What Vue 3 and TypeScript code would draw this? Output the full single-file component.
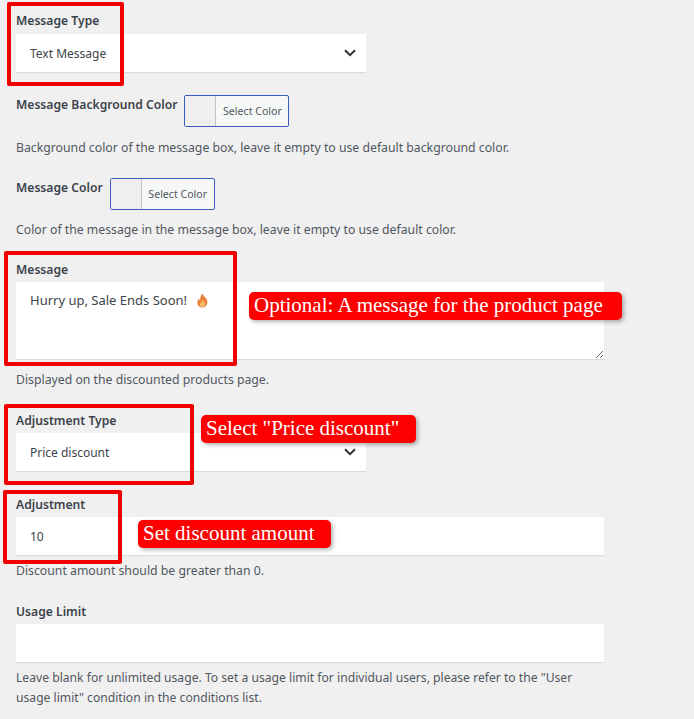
<script setup lang="ts">
interface Frame { x: number; y: number; w: number; h: number }
interface Tag { x: number; y: number; w: number; text: string }
const frames: Frame[] = [
  { x: 7, y: 2, w: 117, h: 84 },
  { x: 4, y: 251, w: 233, h: 115 },
  { x: 4, y: 404, w: 190, h: 81 },
  { x: 3, y: 490, w: 119, h: 74 },
]
const tags: Tag[] = [
  { x: 249, y: 292, w: 373, text: 'Optional: A message for the product page' },
  { x: 201, y: 415, w: 215, text: 'Select "Price discount"' },
  { x: 138, y: 520, w: 193, text: 'Set discount amount' },
]
const boxStyle = (f: Frame) => ({ left: f.x + 'px', top: f.y + 'px', width: f.w + 'px', height: f.h + 'px' })
const tagStyle = (t: Tag) => ({ left: t.x + 'px', top: t.y + 'px', width: t.w + 'px' })
</script>

<template>
  <div class="page">
    <form class="form" @submit.prevent>
      <div class="field first">
        <label class="label">Message Type</label>
        <div class="select-wrap">
          <select class="control narrow"><option>Text Message</option></select>
          <svg class="chevron" viewBox="0 0 12 8" width="12" height="8"><path d="M1 1.2l5 5 5-5" fill="none" stroke="#2c3338" stroke-width="2"/></svg>
        </div>
      </div>

      <div class="field color-one">
        <div class="color-row">
          <label class="label">Message Background Color</label>
          <button type="button" class="color-btn"><span class="swatch"></span><span class="btn-text">Select Color</span></button>
        </div>
        <p class="help after-row">Background color of the message box, leave it empty to use default background color.</p>
      </div>

      <div class="field color-two">
        <div class="color-row">
          <label class="label">Message Color</label>
          <button type="button" class="color-btn"><span class="swatch"></span><span class="btn-text">Select Color</span></button>
        </div>
        <p class="help after-row-two">Color of the message in the message box, leave it empty to use default color.</p>
      </div>

      <div class="field message">
        <label class="label tight">Message</label>
        <div class="textarea-wrap">
          <textarea class="control wide area" aria-label="Message">Hurry up, Sale Ends Soon!</textarea>
          <svg class="flame" viewBox="0 0 14 16" width="13" height="15">
            <path d="M7 .5c.6 2.400 4.300 4.700 5.200 8 .8 3.500-1.900 7-5.200 7s-6-2.600-5.400-6.200c.2-1.500 1-2.700 1.800-3.400 0 1 .4 1.700 1 2.100C4.300 5 5.300 2.500 7 .5z" fill="#e8803a"/>
            <path d="M7.200 7c.4 1.400 2.600 2.700 2.600 4.900 0 1.800-1.300 3-2.900 3s-2.800-1.200-2.700-2.800c.1-1 .7-1.800 1.300-2.200.1.500.3.900.7 1.100C6.100 9.500 6.300 8 7.200 7z" fill="#f6bd6a"/>
          </svg>
        </div>
        <p class="help gap-s">Displayed on the discounted products page.</p>
      </div>

      <div class="field adj-type">
        <label class="label tight">Adjustment Type</label>
        <div class="select-wrap">
          <select class="control narrow"><option>Price discount</option></select>
          <svg class="chevron" viewBox="0 0 12 8" width="12" height="8"><path d="M1 1.2l5 5 5-5" fill="none" stroke="#2c3338" stroke-width="2"/></svg>
        </div>
      </div>

      <div class="field adjustment">
        <label class="label tight">Adjustment</label>
        <input class="control wide" value="10" />
        <p class="help gap-xs">Discount amount should be greater than 0.</p>
      </div>

      <div class="field usage">
        <label class="label tight">Usage Limit</label>
        <input class="control wide" />
        <p class="help gap-xs usage-help">Leave blank for unlimited usage. To set a usage limit for individual users, please refer to the "User usage limit" condition in the conditions list.</p>
      </div>
    </form>

    <div v-for="(f, i) in frames" :key="'f' + i" class="frame" :style="boxStyle(f)"></div>
    <div v-for="(t, i) in tags" :key="'t' + i" class="tag" :style="tagStyle(t)">{{ t.text }}</div>
  </div>
</template>

<style>
html, body { margin: 0; background: #f0f0f1; }
</style>

<style scoped>
.page {
  position: relative;
  width: 694px;
  height: 719px;
  overflow: hidden;
  background: #f0f0f1;
  font-family: "Noto Sans", "Open Sans", "Liberation Sans", sans-serif;
  font-size: 12.25px;
  color: #50575e;
}
.form { width: 588px; padding: 12px 0 0 16px; }
.field { display: flex; flex-direction: column; align-items: flex-start; }
.color-one { margin-top: 23px; }
.color-two { margin-top: 20px; }
.message { margin-top: 21px; }
.adj-type { margin-top: 22px; }
.adjustment { margin-top: 25px; }
.usage { margin-top: 22px; }
.label {
  display: block;
  height: 18px;
  line-height: 18px;
  margin-bottom: 4px;
  font-size: 12.15px;
  font-weight: 600;
  color: #3c434a;
  white-space: nowrap;
}
.label.tight { margin-bottom: 3px; }
.control {
  display: block;
  box-sizing: border-box;
  height: 38px;
  padding: 1px 14px 0;
  border: 0;
  border-radius: 0;
  background: #fff;
  box-shadow: 0 1px 1px rgba(0, 0, 0, 0.09);
  color: #3c434a;
  font: inherit;
  font-size: 12px;
  outline: none;
  appearance: none;
}
.narrow { width: 350px; }
.wide { width: 588px; }
.select-wrap, .textarea-wrap { position: relative; }
.chevron { position: absolute; right: 10px; top: 15px; }
.area {
  height: 77px;
  padding: 8px 14px;
  font-size: 13px;
  line-height: 20px;
  resize: vertical;
}
.flame { position: absolute; left: 180px; top: 11px; }
.color-row { display: flex; align-items: flex-start; gap: 7px; }
.color-row .label { margin: 1px 0 0; }
.color-btn {
  display: flex;
  box-sizing: border-box;
  width: 105px;
  height: 32px;
  padding: 0;
  border: 1px solid #3a5bbf;
  border-radius: 2px;
  background: #f6f7f7;
  font: inherit;
  color: #50575e;
}
.swatch { width: 30px; height: 100%; background: #efefef; border-right: 1px solid #c3c4c7; }
.btn-text { flex: 1; line-height: 30px; font-size: 10.6px; text-align: center; white-space: nowrap; }
.help { margin: 0; line-height: 20px; width: 588px; }
.usage-help { font-size: 12.15px; width: 570px; }
.after-row { margin-top: 11px; }
.after-row-two { margin-top: 10px; }
.gap-s { margin-top: 11px; }
.gap-xs { margin-top: 6px; }
.frame {
  position: absolute;
  box-sizing: border-box;
  border: 4px solid #f00000;
  border-radius: 2px;
}
.tag {
  position: absolute;
  box-sizing: border-box;
  height: 28px;
  padding-left: 5px;
  background: #fe0000;
  border-radius: 5px;
  box-shadow: 2px 2px 4px rgba(0, 0, 0, 0.3);
  color: #fff;
  font-family: "Liberation Serif", serif;
  font-size: 21px;
  line-height: 26px;
  white-space: nowrap;
}
</style>
